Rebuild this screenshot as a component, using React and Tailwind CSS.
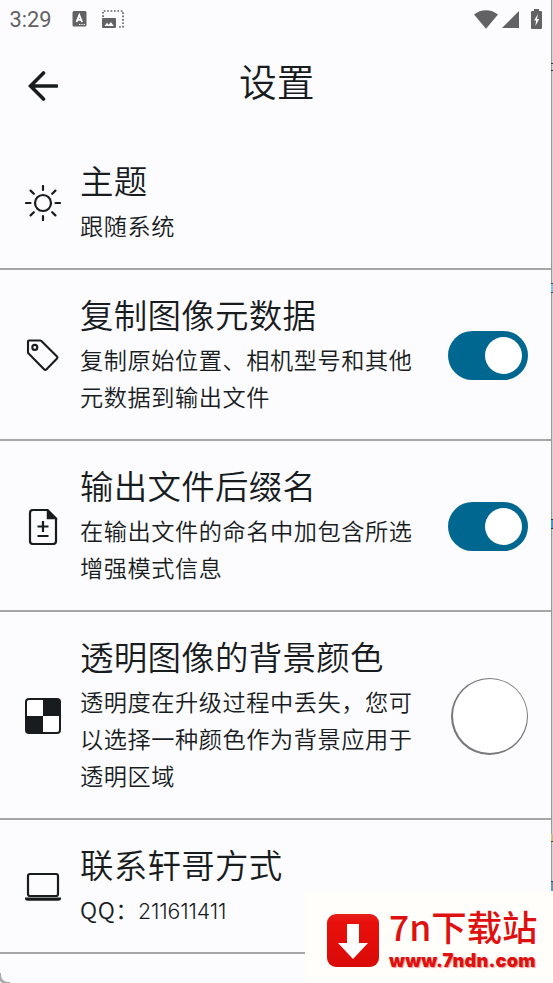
import clsx from 'clsx'

function StatusBar() {
    return (
        <div className="flex h-[38px] items-center pl-[9.500px] pr-[9px] text-[#626264]">
            <span className="font-[Roboto] text-[21.800px] leading-[38px] pt-[2px] w-[42.500px]">3:29</span>
            <svg className="ml-[20px] h-4 w-[15px]" viewBox="0 0 15 16" fill="currentColor">
                <rect x="0.5" width="14" height="15.5" rx="1.5" />
                <path d="M4.5 11 7.3 4.2 10.1 11M5.4 8.8h3.8" fill="none" stroke="#fff" strokeWidth="1.8" />
                <path d="M7 13h1.3v1H7zM9.3 13h1.3v1H9.3zM11.6 13h1.3v1h-1.3z" fill="#fff" />
            </svg>
            <svg className="ml-[15px] h-[18px] w-[22px]" viewBox="0 0 22 18">
                <path
                    d="M1 7V1h20v16h-5"
                    fill="none"
                    stroke="currentColor"
                    strokeWidth="1.7"
                    strokeDasharray="1.7 1.7"
                />
                <rect y="8" width="14" height="10" rx="1" fill="currentColor" />
                <path d="M2.500 16 5 12.700l1.700 2 2.100-2.700 3 4z" fill="#fff" />
            </svg>
            <svg className="ml-auto h-[19px] w-6" viewBox="0 0 24 19" fill="currentColor">
                <path d="M0 4.500C3.400 1.600 7.600.2 12 .2s8.600 1.400 12 4.300L12 18.800z" />
            </svg>
            <svg className="ml-1 h-[17px] w-[17px]" viewBox="0 0 17 17" fill="currentColor">
                <path d="M17 0v17H0z" />
            </svg>
            <svg className="ml-3 h-5 w-[11px]" viewBox="0 0 11 20" fill="currentColor">
                <path d="M3 0h5v2h2q1 0 1 1v16q0 1-1 1H1q-1 0-1-1V3q0-1 1-1h2z" />
                <path d="M7 5 3 11.500h2.200L4.300 17 8.300 10H6z" fill="#fff" />
            </svg>
        </div>
    )
}

function SunIcon() {
    return (
        <svg className="h-9 w-9" viewBox="0 0 36 36" fill="none" stroke="currentColor" strokeWidth="2.2" strokeLinecap="round">
            <circle cx="18" cy="18" r="8" />
            <path d="M18 1v4M18 31v4M1 18h4.500M30.500 18H35M5.600 5.600l3.200 3.200M27.200 27.200l3.200 3.200M5.600 30.400l3.200-3.200M27.200 8.800l3.200-3.200" />
        </svg>
    )
}

function TagIcon() {
    return (
        <svg className="h-9 w-9" viewBox="0 0 36 36" fill="none" stroke="currentColor" strokeWidth="2.100" strokeLinejoin="round">
            <path d="M4 2.500h11q.8 0 1.400.6L32 18.400q1 1.100 0 2.200L21.300 31.400q-1 1-2 0L3.600 15.500q-.6-.6-.6-1.400v-10.600q0-1 1-1z" />
            <circle cx="9.800" cy="9.400" r="2.500" />
        </svg>
    )
}

function FileIcon() {
    return (
        <svg className="h-9 w-9" viewBox="0 0 36 36" fill="none" stroke="currentColor" strokeWidth="2.200">
            <path d="M22.500 1H8Q5 1 5 4v28q0 3 3 3h20q3 0 3-3V9.500z" strokeLinejoin="round" />
            <path d="M22.500 1v8.500H31z" fill="currentColor" strokeWidth="1.500" />
            <path d="M18 12v11M12.500 17.500h11M12.500 27h11" />
        </svg>
    )
}

function CheckerIcon() {
    return (
        <svg className="h-9 w-9" viewBox="0 0 36 36">
            <rect width="36" height="36" rx="4" fill="currentColor" />
            <path d="M4 2h14v16H2V4q0-2 2-2zM18 18h16v14q0 2-2 2H18z" fill="#fff" />
        </svg>
    )
}

function LaptopIcon() {
    return (
        <svg className="h-9 w-9" viewBox="0 0 36 36">
            <rect x="3" y="5" width="30" height="22" rx="2" fill="none" stroke="currentColor" strokeWidth="2.200" />
            <path d="M0 28.500h36v1q0 2.200-3 2.200H3q-3 0-3-2.200z" fill="currentColor" />
        </svg>
    )
}

function Toggle({ checked }) {
    return (
        <div
            role="switch"
            aria-checked={checked}
            className={clsx(
                'flex h-[49px] w-20 items-center rounded-full px-1.5',
                checked ? 'justify-end bg-[#006791]' : 'justify-start bg-[#dfe3e8]',
            )}
        >
            <div className="h-[37px] w-[37px] rounded-full bg-white" />
        </div>
    )
}

function SettingRow({ icon, title, lines, children }) {
    return (
        <div className="flex items-center border-b-2 border-[#a6a6a8] pl-[25px] pr-[22.600px] pt-[24px] pb-[22px]">
            {icon}
            <div className="ml-[19px] flex-1 whitespace-nowrap">
                <h2 className="h-[49px] text-[33.500px] font-[350] leading-[40px] tracking-[0.250px]">{title}</h2>
                {lines.map((line, i) => (
                    <p key={i} className="h-[37px] text-[23.200px] font-[350] leading-[32px] tracking-[0.560px]">
                        {line}
                    </p>
                ))}
            </div>
            {children}
        </div>
    )
}

function Watermark() {
    return (
        <div className="absolute bottom-0 right-0 flex h-[91px] w-[248px] bg-[#fffefa] pl-[22px] pt-[22px] text-[#df1010]">
            <svg className="h-[53px] w-[52px] shrink-0" viewBox="0 0 52 53">
                <defs>
                    <linearGradient id="badge" x1="0" y1="0" x2="0" y2="1">
                        <stop offset="0" stopColor="#e4201b" />
                        <stop offset="0.150" stopColor="#e9100c" />
                        <stop offset="1" stopColor="#d90b08" />
                    </linearGradient>
                </defs>
                <rect width="52" height="53" rx="9" fill="url(#badge)" />
                <path d="M20 10h12v19h9L26 45 11 29h9z" fill="#fff" />
            </svg>
            <div className="ml-[10px] -mt-[9px] whitespace-nowrap">
                <div className="h-[43px] text-[35.400px] font-medium leading-[42px]">7n下载站</div>
                <div className="mt-[2px] font-[Inter] text-[18.200px] font-black leading-[21px] tracking-[0.200px] [text-shadow:1px_1px_1px_#e99]">
                    www.7ndn.com
                </div>
            </div>
        </div>
    )
}

export default function App() {
    return (
        <div className="relative h-[983px] w-[553px] overflow-hidden bg-[#fcfcff] font-['Noto_Sans_CJK_SC',sans-serif] text-[#191c1e]">
            <div className="w-[551px]">
                <StatusBar />
                <header className="flex h-[98px] items-start pl-[28px]">
                    <svg
                        className="mt-[33px] h-[30px] w-[30px]"
                        viewBox="0 0 30 30"
                        fill="none"
                        stroke="currentColor"
                        strokeWidth="3.600"
                        strokeLinecap="round"
                    >
                        <path d="M28.500 15H3M15.500 2 2.500 15l13 13" />
                    </svg>
                    <h1 className="ml-[181px] mt-[14px] text-[37.800px] font-[350] leading-[56px]">设置</h1>
                </header>

                <SettingRow icon={<SunIcon />} title="主题" lines={['跟随系统']} />
                <SettingRow
                    icon={<TagIcon />}
                    title="复制图像元数据"
                    lines={['复制原始位置、相机型号和其他', '元数据到输出文件']}
                >
                    <Toggle checked />
                </SettingRow>
                <SettingRow
                    icon={<FileIcon />}
                    title="输出文件后缀名"
                    lines={['在输出文件的命名中加包含所选', '增强模式信息']}
                >
                    <Toggle checked />
                </SettingRow>
                <SettingRow
                    icon={<CheckerIcon />}
                    title="透明图像的背景颜色"
                    lines={['透明度在升级过程中丢失，您可', '以选择一种颜色作为背景应用于', '透明区域']}
                >
                    <div className="flex h-[77px] w-[77px] rounded-full bg-[#77787a] p-[1.500px]">
                        <div className="flex-1 rounded-full bg-white" />
                    </div>
                </SettingRow>
                <SettingRow
                    icon={<LaptopIcon />}
                    title="联系轩哥方式"
                    lines={[
                        <>
                            QQ：<span className="-ml-[1px] font-[Inter] text-[21.300px] tracking-[-0.100px]">211611411</span>
                        </>,
                    ]}
                />
            </div>

            {/* window edge with slivers of what sits behind it */}
            <div className="absolute right-0 top-0 h-[891px] w-[2px] border-l border-[#99999b] bg-[#d4d4d4]">
                <div className="absolute right-0 top-[63px] h-[8px] w-[2px] border-y border-[#333]" />
                <div className="absolute right-0 top-[283px] h-[10px] w-[2px] border-y border-[#24506b] bg-[#8bbbd5]" />
                <div className="absolute right-0 top-[519px] h-[10px] w-[2px] border-y border-[#173d52] bg-[#4a9ac0]" />
                <div className="absolute right-0 top-[834px] h-[8px] w-[2px] border-b border-[#554a35] bg-[#cdb98b]" />
                <div className="absolute right-0 top-[881px] h-[10px] w-[2px] border-t border-[#24506b] bg-[#7193a8]" />
            </div>
            <div className="absolute -bottom-[2px] -left-[2px] h-[12px] w-[12px] rounded-bl-[10px] border-b-[3px] border-l-[3px] border-[#aaa]" />
            <Watermark />
        </div>
    )
}
